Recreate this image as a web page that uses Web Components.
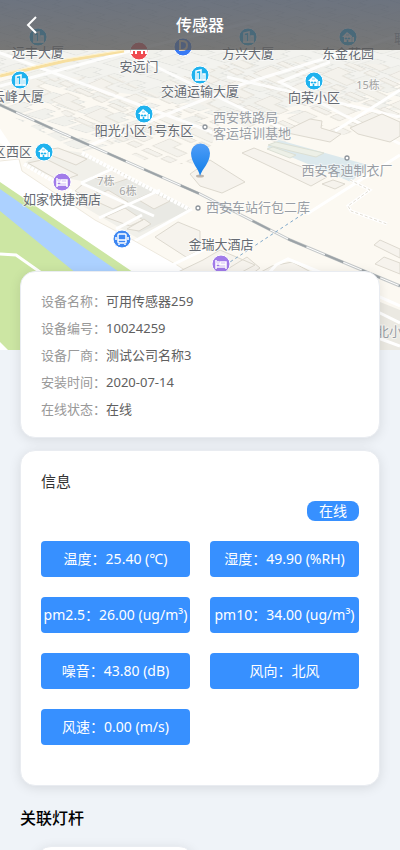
<!DOCTYPE html>
<html lang="zh-CN">
<head>
<meta charset="UTF-8">
<meta name="viewport" content="width=device-width, initial-scale=1">
<title>传感器</title>
<style>
    body {
        margin: 0;
        background: #eff3f8;
        color: #333;
        font: 14px/20px "Noto Sans", "Noto Sans CJK SC", sans-serif;
    }
</style>
</head>
<body>
<sensor-page></sensor-page>

<template id="mapa">
    <style>
        :host { display: block; height: 350px; overflow: hidden; }
        svg { display: block; width: 100%; height: 100%; }
        text { font-size: 13px; fill: #666b73; stroke: #fff; stroke-width: 2px; stroke-opacity: .5; paint-order: stroke; text-anchor: middle; }
        .soft { fill: #999ea5; }
        .small { font-size: 11px; fill: #a3a3a3; }
        .start { text-anchor: start; }
        .end { text-anchor: end; }
        .lot { fill: #f6f3ed; stroke: #ddd9cf; stroke-width: 1; }
        .road { fill: none; stroke: #fff; stroke-width: 3; }
    </style>
    <svg viewBox="0 0 400 350" preserveAspectRatio="xMidYMid slice" role="img" aria-label="地图">
        <defs>
            <g id="tower">
                <circle r="9" fill="#1fb2ee" stroke="#fff"/>
                <path d="M-4 5V-4L1-5V5zM3-1H5V5H3zM-2-2V4" fill="none" stroke="#fff" stroke-width="1.500"/>
                <path d="M-5 5H6" stroke="#fff"/>
            </g>
            <g id="house">
                <circle r="9" fill="#1fb2ee" stroke="#fff"/>
                <path d="M-6 0L-1-5L4-1V5H-4V0zM4 0H6V5H4z" fill="#fff"/>
                <path d="M-3 1H-1V2H-3zM0 1H2V2H0zM-1 3H0V5H-1zM-2-2H1M4 0V5" fill="#1fb2ee" stroke="#1fb2ee" stroke-width=".6"/>
            </g>
            <g id="bed">
                <circle r="9" fill="#a17be9" stroke="#fff"/>
                <path d="M-5-4V5M-5 3H5M5 0V5M-5 0H5M-1-2H5V1H-1z" fill="none" stroke="#fff" stroke-width="1.500"/>
                <circle cx="-3" cy="-2" r="1" fill="#fff"/>
            </g>
            <g id="dot"><circle r="2" fill="#fff" stroke="#8d949b" stroke-width="1.300"/></g>
            <linearGradient id="pin" x2="0" y2="1">
                <stop stop-color="#4f9df8"/><stop offset="1" stop-color="#117ee8"/>
            </linearGradient>
            <pattern id="blocks" width="34" height="26" patternUnits="userSpaceOnUse" patternTransform="matrix(1 .45 -1.3 .55 0 0)">
                <path d="M3 3H15V9H28V16H3zM3 20H18V24H3zM22 19H31V24H22z" fill="#f4f2ec" stroke="#e2dfd7" stroke-width=".8"/>
            </pattern>
            <pattern id="fine" width="22" height="19" patternUnits="userSpaceOnUse" patternTransform="matrix(1 .3 -1.6 .5 0 0)">
                <path d="M2 2H12V7H19V14H2z" fill="#f1f1ec" stroke="#e2e3df" stroke-width=".8"/>
            </pattern>
        </defs>
        <rect width="400" height="350" fill="#fcf9f2"/>
        <path d="M0 0H400V82L226 122L205 106L0 74z" fill="#f3f3ef"/>
        <path d="M0 0H400V110L235 116L80 152L0 110z" fill="url(#fine)"/>
        <path d="M160 83L240 60L400 65V128L275 143z" fill="url(#blocks)"/>
        <path d="M20 80L110 75L220 122L205 163L155 165L90 135z" fill="url(#blocks)"/>

        <!-- calles -->
        <path class="road" stroke-width="5" d="M0 86L130 51L260 20M-5 51L212 132M130 54L290 132M88 146L240 85L400 35M227 77L400 117M330 62L280 82L400 144" stroke-opacity=".85"/>
        <path d="M0 76L65 61L124 51" fill="none" stroke="#f7df9f" stroke-width="3"/>
        <path d="M0 74L65 59L124 50" fill="none" stroke="#fff3cd"/>
        <path class="road" d="M307 214L400 155M400 90L335 131"/>

        <path d="M267 147L279 140L368 165L351 182z" fill="#dce9ed"/>
        <path d="M268 145L276 142L324 153L316 157L291 151zM267 149L273 147L296 155L290 158z" fill="#edf0e7" stroke="#dce0d5"/>
        <path class="lot" d="M190 174L210 160L245 182L222 193L200 186zM242 153L254 148L327 177L311 186zM322 184L333 180L345 184L335 189z"/>
        <path class="lot" d="M283 132L310 119L322 121L321 128L341 134L330 142zM350 128L382 114L400 122V136L390 142L358 134z"/>
        <path class="road" stroke-width="4" d="M350 180L370 190L348 206L351 211L387 224"/>
        <path d="M350 180L370 190L348 206L351 211L387 224" fill="none" stroke="#e2ded4" stroke-dasharray="3 2"/>

        <!-- vía del tren -->
        <path d="M-2 104L55 130L200 194L290 240L400 286" fill="none" stroke="#c4c8c9" stroke-width="3"/>
        <path d="M-2 104L55 130L200 194L290 240L400 286" fill="none" stroke="#fff" stroke-width="1"/>
        <path d="M-2 104L55 130L200 194L290 240L400 286" fill="none" stroke="#9ca3a7" stroke-width="2" stroke-dasharray="20 20"/>

        <!-- manzana residencial -->
        <path d="M24 163L50 148L83 153L192 209L139 239L74 201L82 181L38 173z" fill="#f1f0ea"/>
        <path d="M83 181L113 169L192 209L139 233z" fill="#e9e9e4"/>
        <path class="lot" d="M28 163L46 159L78 175L60 181zM40 151L58 148L87 159L76 165zM83 184L98 192L88 198L75 191zM91 199L108 190L128 202L113 209zM105 217L125 208L143 220L130 226zM137 199L153 192L170 201L154 209zM92 177L114 169L130 178L112 184zM127 229L144 219L151 224L139 231z"/>
        <path d="M82 153L189 209M24 164L84 199" fill="none" stroke="#fff" stroke-width="4" stroke-dasharray="3 1"/>
        <path class="road" d="M81 183L112 169M81 183L154 216M99 218L160 190M116 229L142 215M133 242L192 209"/>
        <path class="lot" d="M155 237L178 222L200 231V250L186 257z"/>

        <!-- parque, río y avenida -->
        <path d="M0 181L155 281L170 350H0z" fill="#cce6a3"/>
        <path d="M0 189L132 281L200 330V350H170L0 211z" fill="#acd1ff"/>
        <path d="M0 160L21 157L0 143L-1 127L17 154L22 171L95 220L133 240L177 265L205 285H152L0 182z" fill="#fff"/>
        <path d="M0 161L19 159L22 171L95 220L133 240L177 265L200 280" fill="none" stroke="#eee9de"/>
        <path class="road" d="M0 254L16 255L43 274L60 300M168 267L205 249"/>
        <path d="M0 342L8 350H0z" fill="#fff"/>

        <!-- edificios del sur -->
        <path class="lot" d="M178 272L203 260L220 250L255 265L225 281H190zM226 270L247 257L260 268L242 281zM250 278L272 266L292 262L326 280zM374 245L380 240L400 249V258zM375 264L384 257L400 263V274z"/>
        <path class="road" stroke-width="4" d="M262 281L276 265L288 259L375 295L400 306"/>
        <path d="M375 300L400 310V350H360z" fill="#ebe9e2"/>
        <path class="road" d="M378 312L400 323M370 335L400 346"/>
        <path d="M303 214L230 262" fill="none" stroke="#7fa8cb" stroke-dasharray="3 3"/>

        <!-- lugares -->
        <use href="#tower" x="38" y="37"/><text x="38" y="57">远丰大厦</text>
        <use href="#tower" x="20" y="80"/><text x="18" y="101">云峰大厦</text>
        <g transform="translate(139 51)">
            <circle r="9" fill="#ef4a50" stroke="#fff"/>
            <path d="M-7 3V-1H7V3M-3 3V0M3 3V0" fill="none" stroke="#fff" stroke-width="2"/>
        </g>
        <text x="139" y="71">安远门</text>
        <g transform="translate(183 47)">
            <circle r="9" fill="#397af4" stroke="#fff"/>
            <path d="M-3-6V3H-1Q4 3 4-2Q4-6-1-6z" fill="none" stroke="#eadac0" stroke-width="2"/>
        </g>
        <use href="#tower" x="200" y="75"/><text x="200" y="96">交通运输大厦</text>
        <use href="#tower" x="248" y="37"/><text x="248" y="58">方兴大厦</text>
        <use href="#house" x="348" y="37"/><text x="348" y="58">东金花园</text>
        <use href="#house" x="314" y="81"/><text x="314" y="102">向荣小区</text>
        <text class="small" x="368" y="89">15栋</text>
        <text class="soft start" x="394" y="43">联</text>
        <use href="#house" x="144" y="114"/><text x="144" y="135">阳光小区1号东区</text>
        <use href="#house" x="44" y="152"/><text class="end" x="32" y="156">区西区</text>
        <use href="#bed" x="62" y="182"/><text x="62" y="204">如家快捷酒店</text>
        <text class="small" x="106" y="185">7栋</text>
        <text class="small" x="128" y="195">6栋</text>
        <use href="#dot" x="205" y="127"/>
        <text class="soft start" x="213" y="122">西安铁路局</text>
        <text class="soft start" x="213" y="138">客运培训基地</text>
        <use href="#dot" x="347" y="158"/><text class="soft" x="347" y="175">西安客迪制衣厂</text>
        <use href="#dot" x="198" y="208"/><text class="soft start" x="206" y="212">西安车站行包二库</text>
        <text x="221" y="249">金瑞大酒店</text><use href="#bed" x="221" y="264"/>
        <text class="soft start" x="376" y="336">北小区</text>
        <g transform="translate(122 239)">
            <circle r="9" fill="#3c86f2" stroke="#fff"/>
            <rect x="-4" y="-5" width="8" height="9" rx="1" fill="none" stroke="#fff" stroke-width="1.500"/>
            <path d="M-4 1H4M-3 5V6M3 5V6M-6-2V1M6-2V1" stroke="#fff" stroke-width="1.500"/>
        </g>
        <ellipse cx="200" cy="176" rx="4" ry="1.500" fill="#9a8c80" opacity=".6"/>
        <path d="M200 176C199 169 191 163 191 153A9.500 9.500 0 0 1 210 153C210 163 202 169 200 176z" fill="url(#pin)"/>
    </svg>
</template>

<script>
    // Crea el shadow root con el contenido indicado
    function montar(el, html) {
        el.attachShadow({ mode: 'open' }).innerHTML = html;
    }

    class StreetMap extends HTMLElement {
        constructor() {
            super();
            this.attachShadow({ mode: 'open' });
            this.shadowRoot.appendChild(document.getElementById('mapa').content.cloneNode(true));
        }
    }

    class NavBar extends HTMLElement {
        constructor() {
            super();
            montar(this, `
                <style>
                    :host {
                        display: grid;
                        grid-template-columns: 64px 1fr 64px;
                        align-items: center;
                        height: 50px;
                        color: #fff;
                        background: linear-gradient(rgba(75, 84, 100, .8), rgba(88, 88, 88, .8));
                    }
                    button { height: 50px; padding: 0; border: 0; background: none; color: inherit; }
                    svg { display: block; margin: auto; }
                    h1 { margin: 0; font-size: 16px; line-height: 24px; font-weight: 500; text-align: center; }
                </style>
                <button type="button" aria-label="返回">
                    <svg width="12" height="20" viewBox="0 0 12 20" fill="none" stroke="currentColor" stroke-width="2"><path d="M10 2L2 10L10 18"/></svg>
                </button>
                <h1><slot></slot></h1>
            `);
        }
    }

    class PanelCard extends HTMLElement {
        constructor() {
            super();
            montar(this, `
                <style>
                    :host {
                        display: block;
                        padding: 20px 20px 18px;
                        border: 1px solid #e9ecf1;
                        border-radius: 15px;
                        background: #fff;
                        box-shadow: 0 2px 12px rgba(0, 0, 0, .1);
                    }
                </style>
                <slot></slot>
            `);
        }
    }

    class DetailRow extends HTMLElement {
        connectedCallback() {
            montar(this, `
                <style>
                    :host { display: flex; font-size: 13px; line-height: 19px; color: #606060; }
                    span { color: #999; }
                </style>
                <span>${this.getAttribute('label')}：</span><slot></slot>
            `);
        }
    }

    class StatusTag extends HTMLElement {
        constructor() {
            super();
            montar(this, `
                <style>
                    :host { display: block; padding: 0 12px; border-radius: 8px; background: #3790ff; color: #fff; line-height: 20px; }
                </style>
                <slot></slot>
            `);
        }
    }

    class SensorValue extends HTMLElement {
        constructor() {
            super();
            montar(this, `
                <style>
                    :host { display: grid; min-width: 0; }
                    button {
                        height: 36px;
                        padding: 0;
                        border: 0;
                        border-radius: 4px;
                        background: #3790ff;
                        color: #fff;
                        font: inherit;
                        display: flex;
                        align-items: center;
                        justify-content: center;
                        white-space: nowrap;
                    }
                </style>
                <button type="button"><slot></slot></button>
            `);
        }
    }

    class SensorPage extends HTMLElement {
        constructor() {
            super();
            montar(this, `
                <style>
                    :host { display: block; height: 100vh; overflow: hidden auto; scrollbar-width: none; }
                    header { display: grid; }
                    header > * { grid-area: 1 / 1; }
                    nav-bar { align-self: start; z-index: 1; }
                    main { display: grid; gap: 12px; padding: 0 20px; margin-top: -79px; position: relative; z-index: 2; }
                    .details { display: grid; gap: 8px; }
                    h2 { margin: 0; font-size: 15px; line-height: 20px; font-weight: 400; }
                    .status { display: flex; justify-content: flex-end; margin: 10px 0 20px; }
                    .values { display: grid; grid-template-columns: 1fr 1fr; gap: 20px; margin-bottom: 22px; }
                    section h2 { color: #000; font-size: 16px; line-height: 24px; font-weight: 500; margin: 8px 0 16px; }
                    .lamp { width: 116px; height: 100px; margin-left: 16px; }
                </style>
                <header>
                    <street-map></street-map>
                    <nav-bar>传感器</nav-bar>
                </header>
                <main>
                    <panel-card>
                        <div class="details">
                            <detail-row label="设备名称">可用传感器259</detail-row>
                            <detail-row label="设备编号">10024259</detail-row>
                            <detail-row label="设备厂商">测试公司名称3</detail-row>
                            <detail-row label="安装时间">2020-07-14</detail-row>
                            <detail-row label="在线状态">在线</detail-row>
                        </div>
                    </panel-card>
                    <panel-card>
                        <h2>信息</h2>
                        <div class="status"><status-tag>在线</status-tag></div>
                        <div class="values">
                            <sensor-value>温度：25.40 (℃)</sensor-value>
                            <sensor-value>湿度：49.90 (%RH)</sensor-value>
                            <sensor-value>pm2.5：26.00 (ug/m³)</sensor-value>
                            <sensor-value>pm10：34.00 (ug/m³)</sensor-value>
                            <sensor-value>噪音：43.80 (dB)</sensor-value>
                            <sensor-value>风向：北风</sensor-value>
                            <sensor-value>风速：0.00 (m/s)</sensor-value>
                        </div>
                    </panel-card>
                    <section>
                        <h2>关联灯杆</h2>
                        <panel-card class="lamp"></panel-card>
                    </section>
                </main>
            `);
        }
    }

    customElements.define('street-map', StreetMap);
    customElements.define('nav-bar', NavBar);
    customElements.define('panel-card', PanelCard);
    customElements.define('detail-row', DetailRow);
    customElements.define('status-tag', StatusTag);
    customElements.define('sensor-value', SensorValue);
    customElements.define('sensor-page', SensorPage);
</script>
</body>
</html>
